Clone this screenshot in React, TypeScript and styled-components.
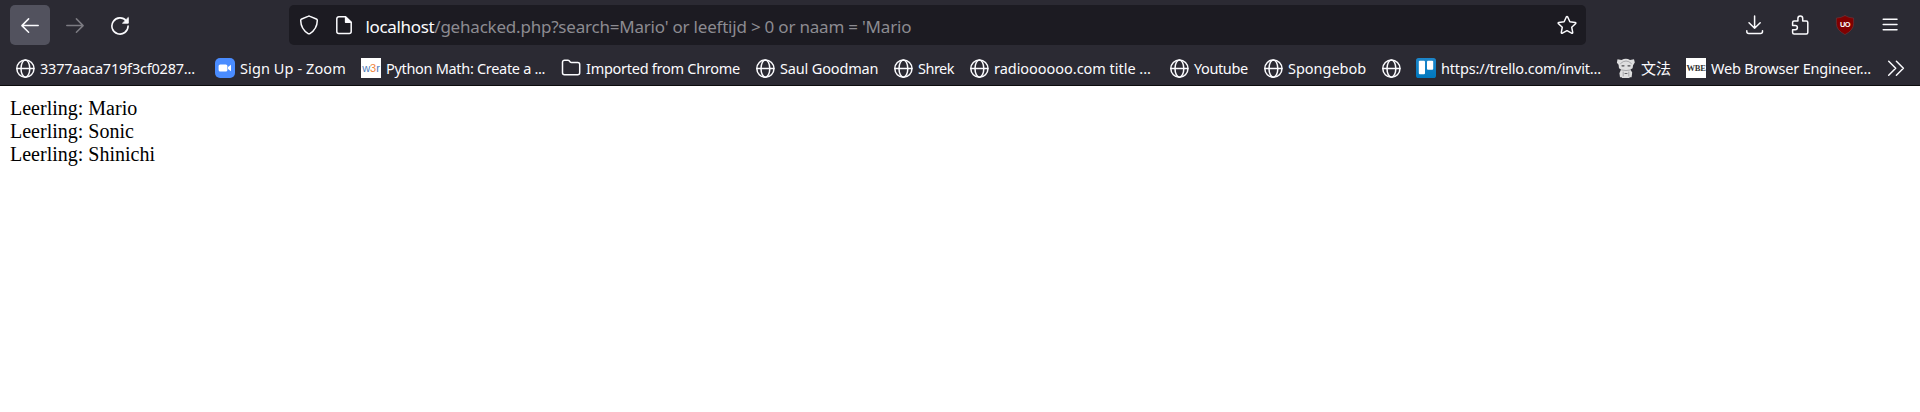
import React from 'react';
import styled, { createGlobalStyle } from 'styled-components';

const GlobalStyle = createGlobalStyle`
  body {
    margin: 0;
    background: #fff;
  }
`;

const Browser = styled.div`
  display: flex;
  flex-direction: column;
  width: 100%;
  color: #fbfbfe;
  font-family: 'Noto Sans', 'Noto Sans CJK SC', sans-serif;
`;

const Chrome = styled.header`
  background: #2b2a33;
  border-bottom: 1px solid #0c0c0d;
`;

const NavBar = styled.nav`
  display: flex;
  align-items: center;
  height: 50px;
  padding: 0 10px;
`;

const ButtonGroup = styled.div`
  display: flex;
  gap: 5px;
`;

const ToolButton = styled.button<{ $active?: boolean; $disabled?: boolean }>`
  display: flex;
  align-items: center;
  justify-content: center;
  width: 40px;
  height: 40px;
  padding: 0;
  border: 0;
  border-radius: 5px;
  background: ${(p) => (p.$active ? '#52525e' : 'transparent')};
  color: ${(p) => (p.$disabled ? '#7c7b82' : '#fbfbfe')};
`;

const UrlBar = styled.div`
  display: flex;
  align-items: center;
  box-sizing: border-box;
  width: 1297px;
  height: 40px;
  margin: 0 149px;
  padding: 0 9px 0 10px;
  border-radius: 5px;
  background: #1c1b22;
`;

const IdentityIcons = styled.div`
  display: flex;
  gap: 15px;
  margin-right: 11.5px;
`;

const Address = styled.div`
  flex: 1;
  padding-top: 3px;
  font-size: 17px;
  line-height: 24px;
  letter-spacing: -0.21px;
  white-space: pre;
  color: #8c8b91;
`;

const Host = styled.span`
  letter-spacing: -0.34px;
  color: #fbfbfe;
`;

const BookmarkBar = styled.div`
  display: flex;
  align-items: flex-start;
  gap: 15px;
  height: 27px;
  padding: 8px 16px 0 15px;
`;

const Bookmark = styled.div`
  display: flex;
  flex: none;
  align-items: center;
  gap: 5px;
  height: 20px;
`;

const BookmarkLabel = styled.span<{ $width: number; $spacing: number }>`
  width: ${(p) => p.$width}px;
  font-size: 14.5px;
  line-height: 20px;
  letter-spacing: ${(p) => p.$spacing}px;
  white-space: nowrap;
`;

const CjkLabel = styled(BookmarkLabel)`
  font-family: 'Noto Sans CJK SC', sans-serif;
  font-size: 15px;
`;

const Icon = styled.svg`
  display: block;
  flex: none;
  width: 20px;
  height: 20px;
  fill: none;
  stroke: currentColor;
  stroke-width: 1.5;
  stroke-linecap: round;
  stroke-linejoin: round;
`;

const OverflowButton = styled.div`
  display: flex;
  margin-left: auto;
`;

const TextFavicon = styled.span<{ $serif?: boolean }>`
  display: flex;
  align-items: center;
  justify-content: center;
  width: 20px;
  height: 20px;
  background: #fff;
  color: ${(p) => (p.$serif ? '#333' : '#4f7dba')};
  font-family: ${(p) => (p.$serif ? "'Liberation Serif', serif" : "'Liberation Sans', sans-serif")};
  font-size: ${(p) => (p.$serif ? '8.5px' : '11px')};
  font-weight: ${(p) => (p.$serif ? 700 : 400)};
  letter-spacing: ${(p) => (p.$serif ? '-0.2px' : '0')};
`;

const Accent = styled.span`
  color: #f0843c;
`;

const Page = styled.main`
  padding: 11px 10px;
  color: #000;
  font-family: 'Liberation Serif', serif;
  font-size: 20px;
  line-height: 23px;
`;

const Line = styled.div``;

const Globe = () => (
  <Icon viewBox="0 0 20 20">
    <circle cx="10.4" cy="10.6" r="8.6" />
    <ellipse cx="10.4" cy="10.6" rx="4.4" ry="8.6" />
    <path d="M2 10.6h16.8" />
  </Icon>
);

const ZoomLogo = () => (
  <Icon viewBox="0 0 20 20">
    <rect width="20" height="20" rx="5" fill="#4a8cff" stroke="none" />
    <rect x="3.6" y="6.4" width="8.8" height="7.2" rx="1.6" fill="#fff" stroke="none" />
    <path d="M13 9l3-2.2v6.4L13 11z" fill="#fff" stroke="none" />
  </Icon>
);

const Folder = () => (
  <Icon viewBox="0 0 20 20">
    <path d="M1.5 4.2a2 2 0 0 1 2-2h3.400q.8 0 1.300.6l1 1.200q.4.5 1.200.5h6.300a2 2 0 0 1 2 2v8.300a2 2 0 0 1-2 2H3.500a2 2 0 0 1-2-2z" />
  </Icon>
);

const TrelloLogo = () => (
  <Icon viewBox="0 0 20 20">
    <defs>
      <linearGradient id="trello" x1="0" y1="0" x2="0" y2="1">
        <stop offset="0" stopColor="#1d86ca" />
        <stop offset="1" stopColor="#0079bf" />
      </linearGradient>
    </defs>
    <rect width="20" height="20" rx="2.6" fill="url(#trello)" stroke="none" />
    <rect x="2.8" y="2.8" width="6.2" height="13.4" rx="1" fill="#fff" stroke="none" />
    <rect x="11" y="2.8" width="6.2" height="9" rx="1" fill="#fff" stroke="none" />
  </Icon>
);

const Mascot = () => (
  <Icon viewBox="0 0 20 20">
    <path d="M1.5 1.2l4 .8Q10-.5 14 2l4-.8.8 3.4-1.700 2.600-.5 3-2.200 1.400 1.800 3-.6 4.600h-2l-.4 2h-7l-.4-2H4l-.6-4 1.600-3.600L3 10.200l-.4-3.400L.9 4.800z" fill="#dededf" stroke="none" />
    <path d="M4.6 5.5q2.500-2.500 5.400-2.500t5.400 2.500M5.600 12q4.400 1.200 8.800 0M7.200 14v4M12.800 14v4" stroke="#98989c" strokeWidth="0.8" />
    <path d="M6 7.8h2M12 7.8h2" stroke="#4d4d52" strokeWidth="1.2" />
    <path d="M9 15.5h2" stroke="#66666a" strokeWidth="1" />
  </Icon>
);

const bookmarks = [
  { icon: <Globe />, label: '3377aaca719f3cf0287...', width: 160, spacing: -0.21 },
  { icon: <ZoomLogo />, label: 'Sign Up - Zoom', width: 106, spacing: 0.1 },
  {
    icon: <TextFavicon>w<Accent>3</Accent>r</TextFavicon>,
    label: 'Python Math: Create a ...', width: 160, spacing: -0.31,
  },
  { icon: <Folder />, label: 'Imported from Chrome', width: 154, spacing: -0.27 },
  { icon: <Globe />, label: 'Saul Goodman', width: 98, spacing: -0.16 },
  { icon: <Globe />, label: 'Shrek', width: 36, spacing: -0.5 },
  { icon: <Globe />, label: 'radioooooo.com title ...', width: 160, spacing: -0.03 },
  { icon: <Globe />, label: 'Youtube', width: 54, spacing: -0.4 },
  { icon: <Globe />, label: 'Spongebob', width: 78, spacing: -0.03 },
  { icon: <Globe /> },
  { icon: <TrelloLogo />, label: 'https://trello.com/invit...', width: 160, spacing: -0.17 },
  { icon: <Mascot />, label: '文法', width: 30, spacing: 0, cjk: true },
  { icon: <TextFavicon $serif>WBE</TextFavicon>, label: 'Web Browser Engineer...', width: 160, spacing: -0.19 },
];

const pupils = ['Mario', 'Sonic', 'Shinichi'];

export default function App() {
  return (
    <Browser>
      <GlobalStyle />
      <Chrome>
        <NavBar>
          <ButtonGroup>
            <ToolButton $active aria-label="Back">
              <Icon viewBox="0 0 20 20"><path d="M18.2 10.6H2M8.6 3.9L1.9 10.6l6.7 6.7" /></Icon>
            </ToolButton>
            <ToolButton $disabled aria-label="Forward">
              <Icon viewBox="0 0 20 20"><path d="M1.8 10.6H18M11.4 3.9l6.7 6.7-6.7 6.7" /></Icon>
            </ToolButton>
            <ToolButton aria-label="Reload">
              <Icon viewBox="0 0 20 20">
                <path d="M16.3 5.9A8.1 8.1 0 1 0 18.1 11" strokeWidth="1.6" />
                <path d="M18.3 2.8v5.4h-5.4z" fill="currentColor" strokeWidth="0.9" />
              </Icon>
            </ToolButton>
          </ButtonGroup>
          <UrlBar>
            <IdentityIcons>
              <Icon viewBox="0 0 20 20">
                <path d="M10 1.1q.5 0 1 .3L17.3 4q1 .4 1 1.500-.2 8.600-7.400 13.100-.9.5-1.800 0Q1.900 14.100 1.700 5.500q0-1.100 1-1.500L9 1.400q.5-.3 1-.3z" />
              </Icon>
              <Icon viewBox="0 0 20 20">
                <path d="M11.4 1.8H4.800a2 2 0 0 0-2 2v12.700a2 2 0 0 0 2 2h10.400a2 2 0 0 0 2-2V7.400z" />
                <path d="M11.6 2v5.200h5.300z" fill="currentColor" />
              </Icon>
            </IdentityIcons>
            <Address>
              <Host>localhost</Host>
              {"/gehacked.php?search=Mario' or leeftijd > 0 or naam = 'Mario"}
            </Address>
            <Icon viewBox="0 0 20 20">
              <path d="M9.3 2q.7-1.200 1.400 0l2.200 4.700 5.200.7q1.300.3.400 1.300l-3.800 3.500 1 5.200q.1 1.300-1.100.8L10 15.700l-4.600 2.500q-1.200.5-1.100-.8l1-5.200L1.500 8.700q-.9-1 .4-1.300l5.200-.7z" />
            </Icon>
          </UrlBar>
          <ButtonGroup>
            <ToolButton aria-label="Downloads">
              <Icon viewBox="0 0 20 20"><path d="M9.6 1v12.200M4 7.700l5.600 5.600 5.600-5.600M1.800 15.800v.7a2 2 0 0 0 2 2h11.700a2 2 0 0 0 2-2v-.7" /></Icon>
            </ToolButton>
            <ToolButton aria-label="Extensions">
              <Icon viewBox="0 0 20 20">
                <path d="M4.1 19.100h12.200a1.500 1.500 0 0 0 1.500-1.500V7.500A1.500 1.500 0 0 0 16.300 6H12.700V3.400a2.400 2.400 0 0 0-4.800 0V6H4.100a1.500 1.500 0 0 0-1.500 1.500v2.900h2.600a2.200 2.200 0 0 1 0 4.400H2.600v2.800a1.500 1.500 0 0 0 1.500 1.500z" />
              </Icon>
            </ToolButton>
            <ToolButton aria-label="uBlock Origin">
              <Icon viewBox="0 0 20 20">
                <path d="M10 .6q3.900 2.400 8.600 2.500v5.500q0 6.500-8.600 11-8.600-4.500-8.600-11V3.100Q6.100 3 10 .6z" fill="#800000" stroke="#6d3a40" strokeWidth="0.6" />
                <text x="10" y="12" textAnchor="middle" fill="#fff" stroke="none" fontFamily="Liberation Sans" fontWeight="700" fontSize="7.4" letterSpacing="-0.5">UO</text>
              </Icon>
            </ToolButton>
            <ToolButton aria-label="Menu">
              <Icon viewBox="0 0 20 20"><path d="M3.2 4.300h13.800M3.200 9.500h13.800M3.200 14.700h13.800" /></Icon>
            </ToolButton>
          </ButtonGroup>
        </NavBar>
        <BookmarkBar>
          {bookmarks.map(({ icon, label, width = 0, spacing = 0, cjk }, i) => {
            const Label = cjk ? CjkLabel : BookmarkLabel;
            return (
              <Bookmark key={i}>
                {icon}
                {label && <Label $width={width} $spacing={spacing}>{label}</Label>}
              </Bookmark>
            );
          })}
          <OverflowButton>
            <Icon viewBox="0 0 20 20"><path d="M2.700 3.300l7 7-7 7M10.400 3.300l7 7-7 7" /></Icon>
          </OverflowButton>
        </BookmarkBar>
      </Chrome>
      <Page>
        {pupils.map((name) => (
          <Line key={name}>Leerling: {name}</Line>
        ))}
      </Page>
    </Browser>
  );
}
